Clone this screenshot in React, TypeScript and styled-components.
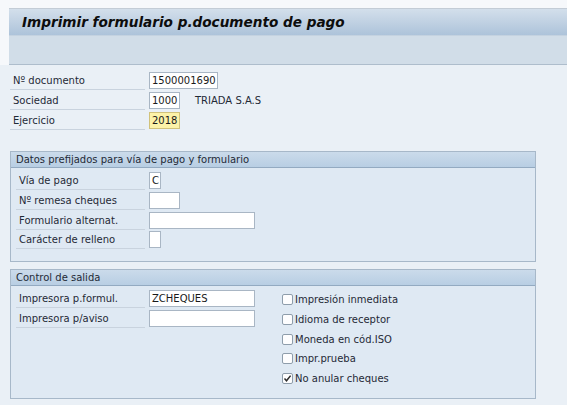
import React from 'react';
import styled, { createGlobalStyle } from 'styled-components';

const GlobalStyle = createGlobalStyle`
  html, body {
    margin: 0;
    padding: 0;
    background: #eaf0f6;
  }
  body {
    font-family: "DejaVu Sans", Verdana, sans-serif;
    font-size: 10px;
    color: #1f2a36;
  }
`;

const Screen = styled.div`
  width: 567px;
  height: 405px;
  overflow: hidden;
  display: flex;
  flex-direction: column;
  background: #eaf0f6;
`;

const Shell = styled.div`
  padding: 8px 0 0 9px;
  background: #f6f8fb;
`;

const TitleBar = styled.div`
  height: 26px;
  border-top: 1px solid #c3ccd6;
  background: linear-gradient(#d3dfeb, #adc3da);
  display: flex;
  align-items: center;
  padding-left: 13px;
`;

const Title = styled.h1`
  margin: 0;
  font-family: "DejaVu Sans", Verdana, sans-serif;
  font-size: 13.6px;
  font-weight: bold;
  font-style: italic;
  color: #0d0d0d;
`;

const Toolbar = styled.div`
  height: 28px;
  background: #d1dde8;
  border-top: 1px solid #c4d2e0;
  border-bottom: 1px solid #aebdcc;
`;

const Content = styled.div`
  flex: 1;
  padding: 7px 31px 0 10px;
  display: flex;
  flex-direction: column;
`;

const Rows = styled.div`
  display: flex;
  flex-direction: column;
`;

const Row = styled.div<{ $h?: number }>`
  display: flex;
  align-items: flex-start;
  height: ${p => p.$h ?? 20}px;
`;

const Label = styled.div<{ $w: number }>`
  width: ${p => p.$w}px;
  height: 18px;
  line-height: 18px;
  padding-left: 3px;
  box-sizing: border-box;
  border-bottom: 1px solid #c9d3de;
  margin-right: 4px;
  white-space: nowrap;
`;

const Field = styled.div<{ $w: number; $yellow?: boolean }>`
  width: ${p => p.$w}px;
  height: 17px;
  box-sizing: border-box;
  border: 1px solid ${p => (p.$yellow ? '#d1c27a' : '#a9b6c4')};
  background: ${p => (p.$yellow ? '#fcf2a8' : '#ffffff')};
  padding-left: 2px;
  line-height: 15px;
  color: #1a1a1a;
  overflow: hidden;
  white-space: nowrap;
`;

const Aside = styled.span`
  margin-left: 15px;
  line-height: 18px;
`;

const Group = styled.div<{ $mt: number; $h: number }>`
  margin-top: ${p => p.$mt}px;
  height: ${p => p.$h}px;
  box-sizing: border-box;
  border: 1px solid #a7b8c9;
  background: #dfe9f3;
  display: flex;
  flex-direction: column;
`;

const GroupHead = styled.div`
  height: 15px;
  line-height: 15px;
  padding-left: 5px;
  background: linear-gradient(#cbdbeb, #b8cee3);
  border-bottom: 1px solid #93aac1;
  white-space: nowrap;
`;

const GroupBody = styled.div`
  display: flex;
  padding: 4px 0 0 5px;
  gap: 27px;
`;

const Checks = styled.div`
  display: flex;
  flex-direction: column;
`;

const CheckRow = styled.label`
  display: flex;
  align-items: center;
  height: 19.7px;
`;

const Box = styled.span`
  width: 11px;
  height: 11px;
  box-sizing: border-box;
  border: 1px solid #8e9dab;
  border-radius: 2px;
  background: #fdfdfe;
  margin-right: 2px;
  display: flex;
  align-items: center;
  justify-content: center;
`;

const Check = ({ label, checked }: { label: string; checked?: boolean }) => (
  <CheckRow>
    <Box>
      {checked && (
        <svg width="9" height="9" viewBox="0 0 9 9">
          <path d="M1.5 4.6 L3.5 6.8 L7.6 1.6" fill="none" stroke="#2b2b2b" strokeWidth="1.5" />
        </svg>
      )}
    </Box>
    {label}
  </CheckRow>
);

const App: React.FC = () => {
  return (
    <Screen>
      <GlobalStyle />
      <Shell>
        <TitleBar>
          <Title>Imprimir formulario p.documento de pago</Title>
        </TitleBar>
        <Toolbar />
      </Shell>
      <Content>
        <Rows>
          <Row>
            <Label $w={135}>Nº documento</Label>
            <Field $w={69}>1500001690</Field>
          </Row>
          <Row>
            <Label $w={135}>Sociedad</Label>
            <Field $w={31}>1000</Field>
            <Aside>TRIADA S.A.S</Aside>
          </Row>
          <Row>
            <Label $w={135}>Ejercicio</Label>
            <Field $w={31} $yellow>2018</Field>
          </Row>
        </Rows>

        <Group $mt={19} $h={111}>
          <GroupHead>Datos prefijados para vía de pago y formulario</GroupHead>
          <GroupBody>
            <Rows>
              <Row>
                <Label $w={129}>Vía de pago</Label>
                <Field $w={12}>C</Field>
              </Row>
              <Row $h={19.7}>
                <Label $w={129}>Nº remesa cheques</Label>
                <Field $w={31} />
              </Row>
              <Row $h={19.7}>
                <Label $w={129}>Formulario alternat.</Label>
                <Field $w={106} />
              </Row>
              <Row>
                <Label $w={129}>Carácter de relleno</Label>
                <Field $w={12} />
              </Row>
            </Rows>
          </GroupBody>
        </Group>

        <Group $mt={7} $h={130}>
          <GroupHead>Control de salida</GroupHead>
          <GroupBody>
            <Rows>
              <Row>
                <Label $w={129}>Impresora p.formul.</Label>
                <Field $w={106}>ZCHEQUES</Field>
              </Row>
              <Row>
                <Label $w={129}>Impresora p/aviso</Label>
                <Field $w={106} />
              </Row>
            </Rows>
            <Checks>
              <Check label="Impresión inmediata" />
              <Check label="Idioma de receptor" />
              <Check label="Moneda en cód.ISO" />
              <Check label="Impr.prueba" />
              <Check label="No anular cheques" checked />
            </Checks>
          </GroupBody>
        </Group>
      </Content>
    </Screen>
  );
};

export default App;
